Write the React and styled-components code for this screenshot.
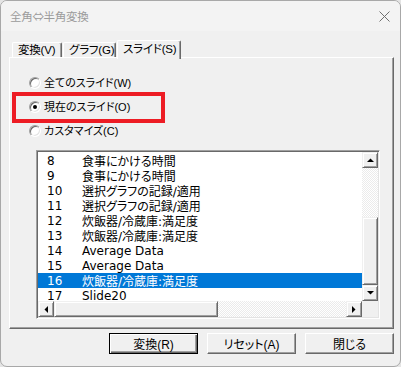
import React from 'react'
import styled, { createGlobalStyle } from 'styled-components'

const GlobalStyle = createGlobalStyle`
  html, body {
    margin: 0;
    padding: 0;
    background: #e4e4e4;
  }
  * { box-sizing: border-box; }
`

const slides = [
    { no: 8, name: '食事にかける時間' },
    { no: 9, name: '食事にかける時間' },
    { no: 10, name: '選択グラフの記録/適用' },
    { no: 11, name: '選択グラフの記録/適用' },
    { no: 12, name: '炊飯器/冷蔵庫:満足度' },
    { no: 13, name: '炊飯器/冷蔵庫:満足度' },
    { no: 14, name: 'Average Data' },
    { no: 15, name: 'Average Data' },
    { no: 16, name: '炊飯器/冷蔵庫:満足度', selected: true },
    { no: 17, name: 'Slide20' },
]

function Arrow({ dir }) {
    const pts = {
        up: '0,4 7,4 3.5,0.5',
        down: '0,0 7,0 3.5,3.5',
        left: '4,0 4,7 0.5,3.5',
        right: '0,0 0,7 3.5,3.5',
    }[dir]
    const vertical = dir === 'up' || dir === 'down'
    return (
        <svg width={vertical ? 7 : 4} height={vertical ? 4 : 7}>
            <polygon points={pts} fill="#000" />
        </svg>
    )
}

function App() {
    return (
        <>
            <GlobalStyle />
            <Window>
                <TitleBar>
                    <Title>全角⇔半角変換</Title>
                    <svg width="11" height="11" viewBox="0 0 11 11">
                        <path d="M0.5 0.5 L10.5 10.5 M10.5 0.5 L0.5 10.5" stroke="#6f6f6f" strokeWidth="1" />
                    </svg>
                </TitleBar>
                <Body>
                    <TabStrip>
                        <Tab $w={50}>変換(V)</Tab>
                        <Tab $w={53}>グラフ(G)</Tab>
                        <Tab $w={64} $active>スライド(S)</Tab>
                    </TabStrip>
                    <Panel>
                        <RadioRow>
                            <Radio />
                            <RadioLabel>全てのスライド(W)</RadioLabel>
                        </RadioRow>
                        <RadioRow>
                            <Radio $checked />
                            <RadioLabel>現在のスライド(O)</RadioLabel>
                        </RadioRow>
                        <RadioRow>
                            <Radio />
                            <RadioLabel>カスタマイズ(C)</RadioLabel>
                        </RadioRow>

                        <ListBox>
                            <ListViewport>
                                {slides.map(s => (
                                    <ListRow key={s.no} $selected={s.selected}>
                                        <ListNo>{s.no}</ListNo>
                                        <span>{s.name}</span>
                                    </ListRow>
                                ))}
                            </ListViewport>
                            <VScroll>
                                <ScrollButton><Arrow dir="up" /></ScrollButton>
                                <Track $grow={49} />
                                <Thumb style={{ height: 68 }} />
                                <ScrollButton><Arrow dir="down" /></ScrollButton>
                            </VScroll>
                            <HScroll>
                                <ScrollButton><Arrow dir="left" /></ScrollButton>
                                <Thumb style={{ width: 164 }} />
                                <Track />
                                <ScrollButton><Arrow dir="right" /></ScrollButton>
                            </HScroll>
                            <Corner />
                        </ListBox>

                        <Highlight />
                    </Panel>
                    <ButtonRow>
                        <Button $default>変換(R)</Button>
                        <Button>リセット(A)</Button>
                        <Button>閉じる</Button>
                    </ButtonRow>
                </Body>
            </Window>
        </>
    )
}

export default App

const uiFont = `"Liberation Sans", "Noto Sans CJK JP", sans-serif`
const listFont = `"DejaVu Sans", "Noto Sans CJK JP", sans-serif`

const Window = styled.div`
    width: 401px;
    height: 367px;
    border: 1px solid #a8a8a8;
    border-radius: 7px;
    background: #f0f0f0;
    overflow: hidden;
    display: flex;
    flex-direction: column;
    font-family: ${uiFont};
    font-feature-settings: "palt";
    color: #000;
`

const TitleBar = styled.div`
    height: 30px;
    flex: none;
    background: #f3f3f3;
    display: flex;
    align-items: center;
    justify-content: space-between;
    padding: 0 10px 0 9px;
`

const Title = styled.div`
    font-family: "Noto Sans CJK JP", sans-serif;
    font-size: 11.5px;
    color: #9b9b9b;
    letter-spacing: -0.3px;
`

const Body = styled.div`
    flex: 1;
    padding: 9px 6px 0 8px;
    display: flex;
    flex-direction: column;
`

const TabStrip = styled.div`
    height: 17px;
    display: flex;
    align-items: flex-end;
    padding-left: 3px;
    gap: 1px;
    position: relative;
    z-index: 1;
`

const Tab = styled.div`
    width: ${p => p.$w}px;
    height: ${p => (p.$active ? 19 : 15)}px;
    margin-bottom: ${p => (p.$active ? -2 : 0)}px;
    background: #f0f0f0;
    border-top: 1px solid #fff;
    border-left: 1px solid #fff;
    border-right: 1px solid #696969;
    box-shadow: inset -1px 0 #a0a0a0;
    border-radius: 2px 2px 0 0;
    font-size: 11.5px;
    line-height: 14px;
    letter-spacing: -0.2px;
    padding: ${p => (p.$active ? '1px 0 0 5px' : '0 0 0 5px')};
    white-space: nowrap;
    overflow: hidden;
`

const Panel = styled.div`
    position: relative;
    width: 385px;
    height: 272px;
    border: 1px solid;
    border-color: #fff #696969 #696969 #fff;
    box-shadow: inset -1px -1px #a0a0a0;
    padding: 13px 0 0 19px;
    display: flex;
    flex-direction: column;
`

const RadioRow = styled.div`
    height: 24px;
    display: flex;
    align-items: center;
    gap: 3px;
`

const Radio = styled.span`
    width: 12px;
    height: 12px;
    border-radius: 50%;
    border: 1px solid;
    border-color: #a0a0a0 #fff #fff #a0a0a0;
    background: #fff;
    box-shadow: inset 1px 1px #696969, inset -1px -1px #e3e3e3;
    display: flex;
    align-items: center;
    justify-content: center;

    &::after {
        content: '';
        width: 4px;
        height: 4px;
        border-radius: 50%;
        background: ${p => (p.$checked ? '#000' : 'transparent')};
    }
`

const RadioLabel = styled.span`
    font-size: 11px;
    line-height: 14px;
`

const Highlight = styled.div`
    position: absolute;
    left: 2px;
    top: 34px;
    width: 153px;
    height: 31px;
    border: 4px solid #ed1c24;
`

const ListBox = styled.div`
    margin: 7px 0 0 7px;
    width: 344px;
    height: 169px;
    border: 1px solid;
    border-color: #a0a0a0 #fff #fff #a0a0a0;
    box-shadow: inset 1px 1px #696969, inset -1px -1px #e3e3e3;
    padding: 1px;
    background: #fff;
    display: grid;
    grid-template-columns: 1fr 16px;
    grid-template-rows: 1fr 16px;
`

const ListViewport = styled.div`
    overflow: hidden;
    padding-top: 1px;
`

const ListRow = styled.div`
    height: 15px;
    display: flex;
    align-items: center;
    font-family: ${listFont};
    font-size: 12px;
    white-space: nowrap;
    background: ${p => (p.$selected ? '#0078d7' : 'transparent')};
    color: ${p => (p.$selected ? '#fff' : '#000')};
`

const ListNo = styled.span`
    width: 44px;
    padding-left: 9px;
    flex: none;
`

const checker = `repeating-conic-gradient(#fff 0 25%, #ebebeb 0 50%) 0 0 / 2px 2px`

const VScroll = styled.div`
    display: flex;
    flex-direction: column;
`

const HScroll = styled.div`
    display: flex;
`

const Track = styled.div`
    flex: ${p => (p.$grow ? `0 0 ${p.$grow}px` : 1)};
    background: ${checker};
`

const raised = `
    background: #f0f0f0;
    border: 1px solid;
    border-color: #f0f0f0 #696969 #696969 #f0f0f0;
    box-shadow: inset 1px 1px #fff, inset -1px -1px #a0a0a0;
`

const ScrollButton = styled.div`
    width: 16px;
    height: 16px;
    flex: none;
    ${raised}
    display: flex;
    align-items: center;
    justify-content: center;
`

const Thumb = styled.div`
    flex: none;
    ${raised}
`

const Corner = styled.div`
    background: #f0f0f0;
`

const ButtonRow = styled.div`
    margin-top: 4px;
    display: flex;
    justify-content: flex-end;
    gap: 9px;
    padding-right: 0;
`

const Button = styled.button`
    width: 89px;
    height: 21px;
    padding: 0;
    font-family: ${uiFont};
    font-feature-settings: "palt";
    font-size: 12px;
    color: #000;
    background: #f0f0f0;
    border: 1px solid;
    border-color: ${p => (p.$default ? '#000' : '#fff #696969 #696969 #fff')};
    box-shadow: ${p => (p.$default
        ? 'inset 1px 1px #fff, inset -1px -1px #696969, inset -2px -2px #a0a0a0'
        : 'inset -1px -1px #a0a0a0')};
`
